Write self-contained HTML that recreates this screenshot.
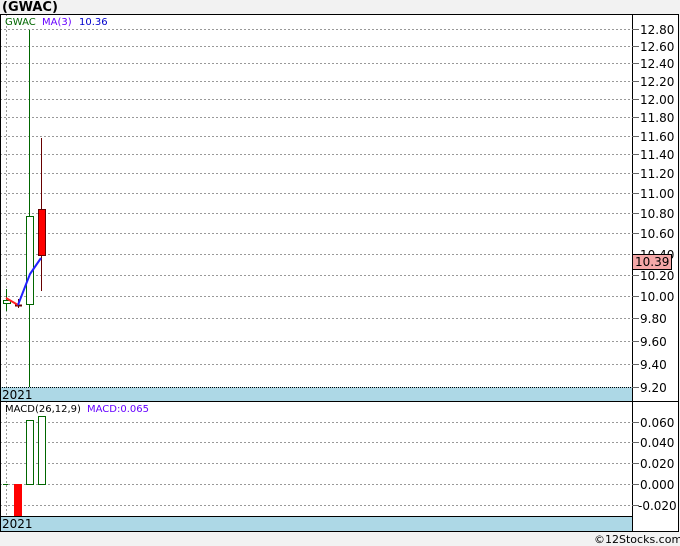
<!DOCTYPE html>
<html><head><style>
body{margin:0;background:#f2f2f2;}
svg{display:block;font-family:"DejaVu Sans","Liberation Sans",sans-serif;}
</style></head><body>
<svg width="680" height="546" xmlns="http://www.w3.org/2000/svg">
<rect x="0" y="0" width="680" height="546" fill="#f2f2f2"/>
<rect x="0" y="14" width="679" height="518" fill="#fff"/>
<text x="2" y="11" font-size="13" font-weight="bold" fill="#000">(GWAC)</text>
<g stroke="#999" stroke-width="1" stroke-dasharray="2,2">
<line x1="0" x2="632" y1="29.5" y2="29.5"/><line x1="0" x2="632" y1="46.5" y2="46.5"/><line x1="0" x2="632" y1="63.5" y2="63.5"/><line x1="0" x2="632" y1="81.5" y2="81.5"/><line x1="0" x2="632" y1="99.5" y2="99.5"/><line x1="0" x2="632" y1="117.5" y2="117.5"/><line x1="0" x2="632" y1="136.5" y2="136.5"/><line x1="0" x2="632" y1="154.5" y2="154.5"/><line x1="0" x2="632" y1="173.5" y2="173.5"/><line x1="0" x2="632" y1="193.5" y2="193.5"/><line x1="0" x2="632" y1="213.5" y2="213.5"/><line x1="0" x2="632" y1="233.5" y2="233.5"/><line x1="0" x2="632" y1="254.5" y2="254.5"/><line x1="0" x2="632" y1="275.5" y2="275.5"/><line x1="0" x2="632" y1="296.5" y2="296.5"/><line x1="0" x2="632" y1="318.5" y2="318.5"/><line x1="0" x2="632" y1="341.5" y2="341.5"/><line x1="0" x2="632" y1="364.5" y2="364.5"/>
<line x1="0" x2="632" y1="422.5" y2="422.5"/><line x1="0" x2="632" y1="442.5" y2="442.5"/><line x1="0" x2="632" y1="463.5" y2="463.5"/><line x1="0" x2="632" y1="484.5" y2="484.5"/><line x1="0" x2="632" y1="505.5" y2="505.5"/>
<line x1="6.5" x2="6.5" y1="14" y2="387"/><line x1="6.5" x2="6.5" y1="401" y2="516"/>
</g>
<rect x="0" y="387" width="632" height="14" fill="#add8e6"/>
<line x1="0" x2="632" y1="387.5" y2="387.5" stroke="#000" stroke-dasharray="1,1"/>
<text x="2" y="399" font-size="12" fill="#000">2021</text>
<rect x="0" y="516" width="632" height="15" fill="#add8e6"/>
<text x="2" y="528" font-size="12" fill="#000">2021</text>
<line x1="6.5" x2="6.5" y1="289" y2="311" stroke="#060"/>
<rect x="3.5" y="300.5" width="7" height="3" fill="#fff" stroke="#060"/>
<line x1="18.5" x2="18.5" y1="299" y2="308" stroke="#600"/>
<line x1="15" x2="22" y1="305.5" y2="305.5" stroke="#600" stroke-width="2"/>
<line x1="29.5" x2="29.5" y1="30" y2="387" stroke="#060"/>
<rect x="26.5" y="216.5" width="7" height="88" fill="#fff" stroke="#060"/>
<line x1="41.5" x2="41.5" y1="138" y2="291" stroke="#600"/>
<rect x="38.5" y="209.5" width="7" height="46" fill="#f00" stroke="#600"/>
<polyline points="6,298 18,305" fill="none" stroke="#f22" stroke-width="2"/>
<polyline points="18,305 30,274 41,258" fill="none" stroke="#22f" stroke-width="2"/>
<text x="5" y="25" font-size="10" fill="#060">GWAC</text>
<text x="42" y="25" font-size="10" fill="#60f">MA(3)</text>
<text x="79" y="25" font-size="10" fill="#00c">10.36</text>
<line x1="3" x2="8" y1="484.5" y2="484.5" stroke="#060"/>
<rect x="14" y="484" width="8" height="32" fill="#f00"/>
<rect x="26.5" y="420.5" width="7" height="64" fill="#fff" stroke="#060"/>
<rect x="38.5" y="416.5" width="7" height="68" fill="#fff" stroke="#060"/>
<text x="5" y="412" font-size="10" fill="#000">MACD(26,12,9)</text>
<text x="87" y="412" font-size="10" fill="#60f">MACD:0.065</text>
<rect x="0.5" y="14.5" width="678" height="517" fill="none" stroke="#000"/>
<line x1="632.5" x2="632.5" y1="14" y2="532" stroke="#000"/>
<line x1="0" x2="679" y1="401.5" y2="401.5" stroke="#000"/>
<line x1="0" x2="632" y1="516.5" y2="516.5" stroke="#000"/>
<g stroke="#666">
<line x1="632" x2="639" y1="29.5" y2="29.5"/><line x1="632" x2="639" y1="46.5" y2="46.5"/><line x1="632" x2="639" y1="63.5" y2="63.5"/><line x1="632" x2="639" y1="81.5" y2="81.5"/><line x1="632" x2="639" y1="99.5" y2="99.5"/><line x1="632" x2="639" y1="117.5" y2="117.5"/><line x1="632" x2="639" y1="136.5" y2="136.5"/><line x1="632" x2="639" y1="154.5" y2="154.5"/><line x1="632" x2="639" y1="173.5" y2="173.5"/><line x1="632" x2="639" y1="193.5" y2="193.5"/><line x1="632" x2="639" y1="213.5" y2="213.5"/><line x1="632" x2="639" y1="233.5" y2="233.5"/><line x1="632" x2="639" y1="254.5" y2="254.5"/><line x1="632" x2="639" y1="275.5" y2="275.5"/><line x1="632" x2="639" y1="296.5" y2="296.5"/><line x1="632" x2="639" y1="318.5" y2="318.5"/><line x1="632" x2="639" y1="341.5" y2="341.5"/><line x1="632" x2="639" y1="364.5" y2="364.5"/><line x1="632" x2="639" y1="387.5" y2="387.5"/>
<line x1="632" x2="639" y1="422.5" y2="422.5"/><line x1="632" x2="639" y1="442.5" y2="442.5"/><line x1="632" x2="639" y1="463.5" y2="463.5"/><line x1="632" x2="639" y1="484.5" y2="484.5"/><line x1="632" x2="639" y1="505.5" y2="505.5"/>
</g>
<g font-size="12" fill="#000">
<text x="640" y="34">12.80</text><text x="640" y="51">12.60</text><text x="640" y="68">12.40</text><text x="640" y="86">12.20</text><text x="640" y="104">12.00</text><text x="640" y="122">11.80</text><text x="640" y="141">11.60</text><text x="640" y="159">11.40</text><text x="640" y="178">11.20</text><text x="640" y="198">11.00</text><text x="640" y="218">10.80</text><text x="640" y="238">10.60</text><text x="640" y="259">10.40</text><text x="640" y="280">10.20</text><text x="640" y="301">10.00</text><text x="640" y="323">9.80</text><text x="640" y="346">9.60</text><text x="640" y="369">9.40</text><text x="640" y="392">9.20</text>
<text x="640" y="427">0.060</text><text x="640" y="447">0.040</text><text x="640" y="468">0.020</text><text x="640" y="489">0.000</text><text x="638" y="510">-0.020</text>
</g>
<rect x="632.5" y="254.5" width="39" height="15" fill="#f4a8a8" stroke="#000"/>
<text x="635" y="266" font-size="12" fill="#000">10.39</text>
<text x="594" y="543" font-size="11" fill="#000">©12Stocks.com</text>
</svg>
</body></html>
